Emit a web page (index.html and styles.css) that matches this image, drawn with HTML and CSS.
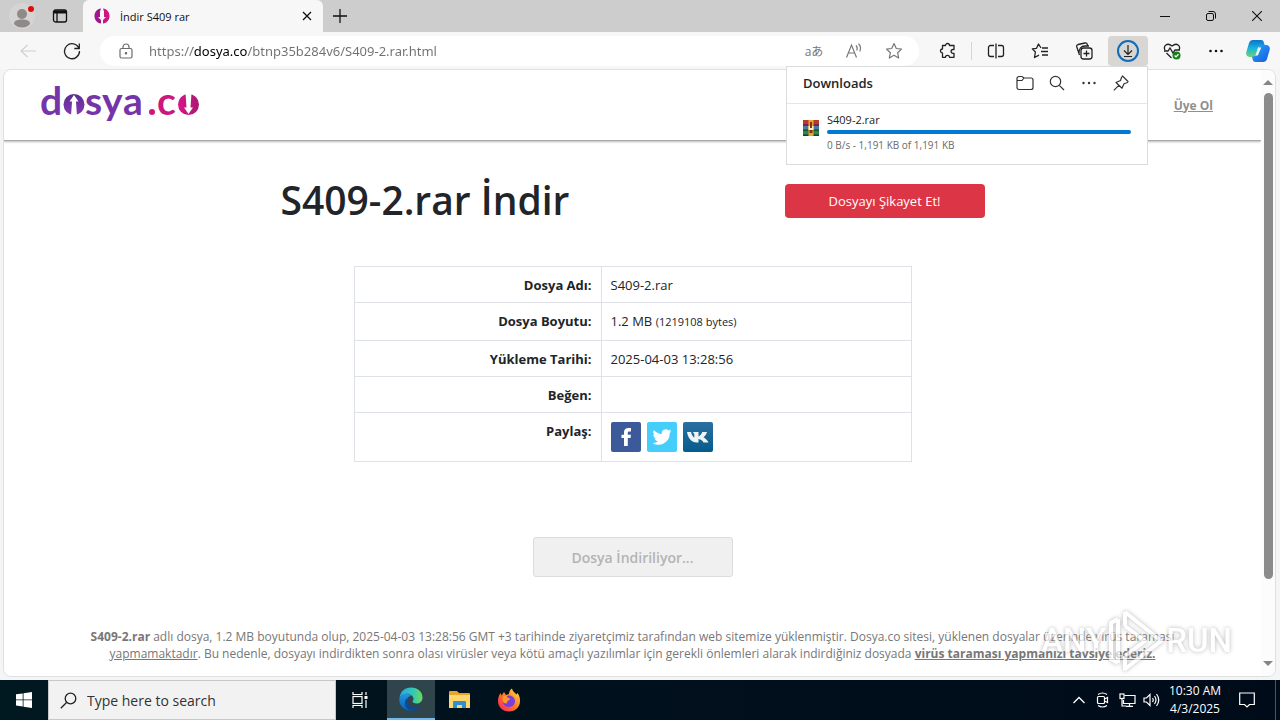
FILE: index.html
```html
<!DOCTYPE html>
<html lang="tr">
<head>
<meta charset="utf-8">
<title>İndir S409 rar</title>
<link rel="stylesheet" href="styles.css">
</head>
<body>
<div class="browser">
  <header class="tabs">
    <button class="icon-btn profile" aria-label="Profile"><svg width="32" height="30" viewBox="0 0 32 30"><circle cx="16" cy="15" r="13" fill="#d6d4d2"/><circle cx="16" cy="13" r="5" fill="#8d8a88"/><path d="M8 23c0-3.500 3.500-4.500 8-4.500s8 1 8 4.500c-2 2.500-5 3.500-8 3.500s-6-1-8-3.500z" fill="#8d8a88"/><circle cx="25" cy="8" r="3" fill="#e10b0b"/></svg></button>
    <button class="icon-btn tab-actions" aria-label="Tab actions"><svg width="16" height="16" viewBox="0 0 16 16" fill="none" stroke="#111" stroke-width="1.300"><rect x="1.500" y="2" width="13" height="12" rx="2"/><path d="M2 4h12" stroke-width="3"/><path d="M5 5v9"/></svg></button>
    <div class="tab">
      <svg width="16" height="16" viewBox="0 0 16 16"><path d="M7 .5C3 1 .5 4 .5 8S3 15 7 15.500V12L4 9h2V3.500z" fill="#a0168c"/><path d="M9 .5c4 .5 6.500 3.500 6.500 7.500S13 15 9 15.500V12l3-3h-2V3.500z" fill="#cf1580"/></svg>
      <span class="tab-title">İndir S409 rar</span>
      <button class="icon-btn tab-close" aria-label="Close tab"><svg width="10" height="10" viewBox="0 0 10 10" stroke="#111" stroke-width="1.300"><path d="M1 1l8 8M9 1l-8 8"/></svg></button>
    </div>
    <button class="icon-btn new-tab" aria-label="New tab"><svg width="14" height="14" viewBox="0 0 14 14" stroke="#111" stroke-width="1.300"><path d="M7 0v14M0 7h14"/></svg></button>
    <div class="window-controls">
      <button class="icon-btn" aria-label="Minimize"><svg width="10" height="10" viewBox="0 0 10 10" stroke="#111"><path d="M0 5.500h10"/></svg></button>
      <button class="icon-btn" aria-label="Restore"><svg width="10" height="10" viewBox="0 0 10 10" fill="none" stroke="#111"><rect x=".5" y="2.500" width="7" height="7" rx="1.500"/><path d="M2.500.5H7a2.500 2.500 0 0 1 2.500 2.500v4.500"/></svg></button>
      <button class="icon-btn" aria-label="Close"><svg width="10" height="10" viewBox="0 0 10 10" stroke="#111" stroke-width="1.100"><path d="M0 0l10 10M10 0L0 10"/></svg></button>
    </div>
  </header>

  <nav class="toolbar">
    <button class="icon-btn nav-btn" aria-label="Back" disabled><svg width="16" height="14" viewBox="0 0 16 14" fill="none" stroke="#cfcfcf" stroke-width="1.200"><path d="M16 7H1M7.500 1L1 7l6.500 6"/></svg></button>
    <button class="icon-btn nav-btn" aria-label="Refresh"><svg width="18" height="18" viewBox="0 0 18 18" fill="none" stroke="#222" stroke-width="1.300"><path d="M16 6.500A7.500 7.500 0 1 0 16.500 9M16.300 1.500v5h-5"/></svg></button>
    <div class="address">
      <svg class="lock" width="14" height="16" viewBox="0 0 14 16" fill="none" stroke="#6c6c6c" stroke-width="1.200"><rect x="1" y="5.500" width="12" height="9.500" rx="1.500"/><path d="M4 5.500V4a3 3 0 0 1 6 0v1.500"/><circle cx="7" cy="10.300" r=".7" fill="#6c6c6c"/></svg>
      <input class="url" type="text" aria-label="Address" value="https://dosya.co/btnp35b284v6/S409-2.rar.html">
      <button class="icon-btn tool translate" aria-label="Translate"><span>aあ</span></button>
      <button class="icon-btn tool" aria-label="Read aloud"><svg width="18" height="16" viewBox="0 0 18 16" fill="none" stroke="#777" stroke-width="1.200"><path d="M1.500 14.500L6.500 2l5 12.500M3.200 10h6.600M11 2.500q2 2 .8 5M13.500.8q3.300 3.200 1.300 7.700"/></svg></button>
      <button class="icon-btn tool" aria-label="Add to favorites"><svg width="18" height="18" viewBox="0 0 18 18" fill="none" stroke="#777" stroke-width="1.200" stroke-linejoin="round"><path d="M9 1.500l2.300 5 5.200.6-3.900 3.600 1.100 5.300L9 13.300 4.300 16l1.100-5.300L1.500 7.100l5.200-.6z"/></svg></button>
    </div>
    <button class="icon-btn tool" aria-label="Extensions"><svg width="18" height="18" viewBox="0 0 18 18" fill="none" stroke="#222" stroke-width="1.300" stroke-linejoin="round"><path d="M3.500 3.500h3a2 2 0 1 1 4 0H15v4h-1a1.800 1.800 0 1 0 0 3.800h1v4h-4.500a2 2 0 0 0-4 0h-3V11a2 2 0 1 1 0-4z"/></svg></button>
    <span class="divider"></span>
    <button class="icon-btn tool" aria-label="Split screen"><svg width="18" height="18" viewBox="0 0 18 18" fill="none" stroke="#222" stroke-width="1.300"><path d="M7 3.500H3.500a2 2 0 0 0-2 2v7a2 2 0 0 0 2 2H7M11 3.500h3.500a2 2 0 0 1 2 2v7a2 2 0 0 1-2 2H11M9 1.500v15"/></svg></button>
    <button class="icon-btn tool" aria-label="Favorites"><svg width="18" height="18" viewBox="0 0 18 18" fill="none" stroke="#222" stroke-width="1.300" stroke-linejoin="round"><path d="M10 6L7.500 2 5.500 6.300l-4.200.6L4.400 10l-.9 5.500L8 13.200M11 6h6M10 9.500h7M11 13h6"/></svg></button>
    <button class="icon-btn tool" aria-label="Collections"><svg width="18" height="18" viewBox="0 0 18 18" fill="none" stroke="#222" stroke-width="1.300"><rect x="6" y="6" width="11" height="11" rx="2.500"/><path d="M11.500 8.500v6M8.500 11.500h6M4.500 13L1.800 5a2 2 0 0 1 1.300-2.500L10 1a2 2 0 0 1 2.300 1.500l.5 1.500M4 12c0-5 1-8 6-8h4"/></svg></button>
    <button class="icon-btn tool active" aria-label="Downloads" aria-expanded="true"><svg width="22" height="22" viewBox="0 0 22 22" fill="none"><circle cx="11" cy="11" r="10" stroke="#0f6cbd" stroke-width="2"/><path d="M11 5v9M7 10.500l4 4 4-4M7 16.500h8" stroke="#222" stroke-width="1.200"/></svg></button>
    <button class="icon-btn tool" aria-label="Browser essentials"><svg width="18" height="18" viewBox="0 0 18 18" fill="none" stroke="#222" stroke-width="1.300"><path d="M2 8C0 4 4 0 9 4c5-4 9 0 7 4M1 9h4l2-3 3 5 2-3h5M3.500 11l5 5"/><circle cx="13.500" cy="13.500" r="4" fill="#16801a" stroke="none"/><path d="M11.600 13.500l1.400 1.400 2.500-2.700" stroke="#fff"/></svg></button>
    <button class="icon-btn tool" aria-label="Settings and more"><svg width="16" height="4" viewBox="0 0 16 4" fill="#111"><circle cx="2.500" cy="2" r="1.300"/><circle cx="8" cy="2" r="1.300"/><circle cx="13.500" cy="2" r="1.300"/></svg></button>
    <button class="icon-btn copilot" aria-label="Copilot"><svg width="24" height="24" viewBox="0 0 24 24"><defs><linearGradient id="ca" x1="0" y1="0" x2="0" y2="1"><stop offset="0" stop-color="#0c72cf"/><stop offset=".5" stop-color="#19b6d8"/><stop offset="1" stop-color="#76d36b"/></linearGradient><linearGradient id="cb" x1="0" y1="0" x2="1" y2="1"><stop offset="0" stop-color="#2aa8f5"/><stop offset="1" stop-color="#1659e0"/></linearGradient></defs><path d="M7 1h8c2 0 2.500 1 3 3l1 3h-4c-2 0-3 1-3.500 3L10 15c-.6 2-1.500 3-3.500 3H4c-3 0-4.500-2-3.500-5.500L3 4C3.700 2 5 1 7 1z" fill="url(#ca)"/><path d="M17 23H9.500C7.500 23 7 22 6.500 20L6 17.500h1c2 0 3-1 3.500-3L13 8c.6-1.500 1.500-2 3.500-2H20c3 0 4.500 2 3.500 5.500L21 20c-.7 2-2 3-4 3z" fill="url(#cb)"/><path d="M12.700 8.500h2.600l-3.500 8H9.500z" fill="#eef9ff"/></svg></button>

    <section class="downloads" aria-label="Downloads">
      <div class="downloads-head">
        <h2>Downloads</h2>
        <button class="icon-btn small" aria-label="Open downloads folder"><svg width="18" height="16" viewBox="0 0 18 16" fill="none" stroke="#333" stroke-width="1.200"><path d="M1 5.500V3.500a2 2 0 0 1 2-2h3L8 3h7a2 2 0 0 1 2 2v7.500a2 2 0 0 1-2 2H3a2 2 0 0 1-2-2zM1 5.500h5L8 3"/></svg></button>
        <button class="icon-btn small" aria-label="Search downloads"><svg width="16" height="16" viewBox="0 0 16 16" fill="none" stroke="#333" stroke-width="1.200"><circle cx="6.500" cy="6.500" r="5.200"/><path d="M10.300 10.300L15 15"/></svg></button>
        <button class="icon-btn small" aria-label="More options"><svg width="16" height="4" viewBox="0 0 16 4" fill="#333"><circle cx="2.500" cy="2" r="1.200"/><circle cx="8" cy="2" r="1.200"/><circle cx="13.500" cy="2" r="1.200"/></svg></button>
        <button class="icon-btn small" aria-label="Pin downloads"><svg width="16" height="16" viewBox="0 0 16 16" fill="none" stroke="#333" stroke-width="1.200" stroke-linejoin="round"><path d="M9.500 1l5.500 5.500-1 1.200-3 1-2 4.500L3 7.500l4.500-2 1-3zM5.800 10.300L.8 15.300"/></svg></button>
      </div>
      <div class="download">
        <svg width="16" height="16" viewBox="0 0 16 16"><path fill="#b83a2c" d="M0 0h16v5H0z"/><path fill="#4c78a8" d="M0 5h16v5H0z"/><path fill="#278a45" d="M0 10h16v6H0z"/><path fill="#7c2448" d="M0 4h6v2H0zM10 4h6v2h-6z"/><path fill="#1c3f2a" d="M0 9.500h16v1.200H0zM0 14.500h16V16H0z"/><path fill="#e8a62c" d="M5.500 0h5v16h-5z"/><path fill="#fff0bd" d="M5.500 6h5v4h-5z"/><path fill="#8a2d20" d="M7 2h2v6H7zM6.500 10h3v3h-3z"/></svg>
        <div class="download-info">
          <span class="download-name">S409-2.rar</span>
          <div class="progress" role="progressbar" aria-valuenow="100" aria-label="S409-2.rar"></div>
          <span class="download-size">0 B/s - 1,191 KB of 1,191 KB</span>
        </div>
      </div>
    </section>
  </nav>

  <div class="viewport">
    <div class="page">
      <header class="site-head">
        <a class="logo" href="#" aria-label="dosya.co"><svg width="162" height="60" viewBox="0 0 162 60"><defs><linearGradient id="lp" x1="0" y1="0" x2="0" y2="1"><stop offset="0" stop-color="#5a2d91"/><stop offset="1" stop-color="#8538b4"/></linearGradient><linearGradient id="lk" x1="0" y1="0" x2="1" y2="0"><stop offset="0" stop-color="#d81686"/><stop offset="1" stop-color="#a81972"/></linearGradient></defs><text class="logo-purple" x="0" y="40">d</text><text class="logo-purple" x="45" y="40">s</text><text class="logo-purple" x="62" y="40">y</text><text class="logo-purple" x="83" y="40">a</text><circle cx="34" cy="29.500" r="10.500" fill="url(#lp)"/><path d="M34 20l4.500 6.500h-2.500l1 14.500h-6l1-14.500h-2.500z" fill="#fff"/><circle cx="112" cy="37" r="3" fill="#ce1681"/><text class="logo-pink" x="117" y="40">c</text><circle cx="148.500" cy="29.500" r="10.500" fill="url(#lk)"/><path d="M148.500 39l-4.500-6.500h2.500l-1-14.500h6l-1 14.500h2.500z" fill="#fff"/></svg></a>
        <a class="signup" href="#">Üye Ol</a>
      </header>
      <main class="content">
        <div class="title-row">
          <h1>S409-2.rar İndir</h1>
          <button class="report">Dosyayı Şikayet Et!</button>
        </div>
        <table class="details">
          <tr><th scope="row">Dosya Adı:</th><td>S409-2.rar</td></tr>
          <tr><th scope="row">Dosya Boyutu:</th><td>1.2 MB <small>(1219108 bytes)</small></td></tr>
          <tr><th scope="row">Yükleme Tarihi:</th><td>2025-04-03 13:28:56</td></tr>
          <tr><th scope="row">Beğen:</th><td></td></tr>
          <tr><th scope="row">Paylaş:</th><td><div class="share">
            <a href="#" aria-label="Facebook"><svg width="30" height="30" viewBox="0 0 30 30"><rect width="30" height="30" rx="2" fill="#3c5a99"/><path d="M13 24v-8h-2.500v-3.300H13v-2.200C13 7.500 14.500 6 17.300 6H20v3.400h-1.700c-1.200 0-1.500.5-1.500 1.500v1.800H20l-.5 3.300h-2.700v8z" fill="#fff"/></svg></a>
            <a href="#" aria-label="Twitter"><svg width="30" height="30" viewBox="0 0 30 30"><rect width="30" height="30" rx="2" fill="#45cdfb"/><path d="M24.500 9c-.7.400-1.400.5-2.200.6.800-.5 1.400-1.200 1.700-2.100-.7.400-1.600.8-2.500.9a4 4 0 0 0-6.700 3.600c-3.200-.2-6.100-1.700-8-4.100-1.100 1.900-.5 4 1.200 5.200-.7 0-1.300-.2-1.800-.5 0 1.900 1.300 3.500 3.100 3.900-.6.100-1.200.2-1.800.1.500 1.600 2 2.700 3.700 2.700a8 8 0 0 1-5.800 1.700 11.300 11.300 0 0 0 17.300-10c.8-.5 1.400-1.200 1.800-2z" fill="#fff"/></svg></a>
            <a href="#" aria-label="VK"><svg width="30" height="30" viewBox="0 0 30 30"><defs><linearGradient id="vk" x1="0" y1="0" x2="0" y2="1"><stop offset="0" stop-color="#2a70a0"/><stop offset="1" stop-color="#055b8e"/></linearGradient></defs><rect width="30" height="30" rx="2" fill="url(#vk)"/><path d="M4 10h4c.5 2.500 2 5 3.300 5.700V12l-1.500-2H15.500v4.500c1.500-.5 3-2.500 3.800-4.500H24c-.5 2-2 4-3.500 5.200 2 1.200 3.800 2.800 5 5.300h-5c-.8-1.700-2.500-3-5-3.500v3.500h-1.800C8.500 20.500 5 16 4 10z" fill="#eef3f6"/></svg></a>
          </div></td></tr>
        </table>
        <button class="downloading" disabled>Dosya İndiriliyor...</button>
        <p class="notice"><b>S409-2.rar</b> adlı dosya, 1.2 MB boyutunda olup, 2025-04-03 13:28:56 GMT +3 tarihinde ziyaretçimiz tarafından web sitemize yüklenmiştir. Dosya.co sitesi, yüklenen dosyalar üzerinde virüs taraması<br><u>yapmamaktadır</u>. Bu nedenle, dosyayı indirdikten sonra olası virüsler veya kötü amaçlı yazılımlar için gerekli önlemleri alarak indirdiğiniz dosyada <b><u>virüs taraması yapmanızı tavsiye ederiz.</u></b></p>
      </main>
    </div>
    <div class="scrollbar"><span class="arrow up"></span><span class="thumb"></span><span class="arrow down"></span></div>
    <div class="watermark">
      <span>ANY</span>
      <svg width="60" height="66" viewBox="0 0 60 66" fill="none" stroke="#fff" stroke-width="4" stroke-linejoin="round"><path d="M12 11L5 15v36l7 4M12 11v44M19 4v14M19 48v13l36-28L19 4M19 18l20 15-20 15"/></svg>
      <span>RUN</span>
    </div>
  </div>
</div>

<footer class="taskbar">
  <button class="icon-btn task" aria-label="Start"><svg width="16" height="16" viewBox="0 0 16 16" fill="#fff"><path d="M0 2.300L6.700 1.400v6.100H0zM7.500 1.300L16 0v7.500H7.500zM0 8.300h6.700v6.200L0 13.600zM7.500 8.300H16V16l-8.500-1.200z"/></svg></button>
  <label class="search"><svg width="17" height="17" viewBox="0 0 17 17" fill="none" stroke="#222" stroke-width="1.300"><circle cx="10.500" cy="6.500" r="5.300"/><path d="M6.800 10.300L.8 16.300"/></svg><input type="text" placeholder="Type here to search" aria-label="Search"></label>
  <button class="icon-btn task taskview" aria-label="Task View"><svg width="16" height="16" viewBox="0 0 16 16" fill="none" stroke="#fff" stroke-width="1.200"><path d="M1 0v2.500h9V0M1 16v-2.500h9V16M14 0v3M14 8v8"/><rect x="1" y="4.500" width="9" height="7"/><path d="M12.500 5.500h3" stroke-width="3"/></svg></button>
  <button class="icon-btn task current" aria-label="Microsoft Edge"><svg width="24" height="24" viewBox="0 0 24 24"><defs><linearGradient id="ea" x1="0" y1="0" x2="1" y2="0"><stop offset="0" stop-color="#28a9e4"/><stop offset=".6" stop-color="#35c8b4"/><stop offset="1" stop-color="#69dc55"/></linearGradient><linearGradient id="eb" x1="0" y1="0" x2="0" y2="1"><stop offset="0" stop-color="#1f98e0"/><stop offset="1" stop-color="#0d5fb5"/></linearGradient></defs><path d="M.5 11C1.500 4 6 .5 12 .5c7 0 11.500 4.500 11.500 10 0 4-3 6-6 6-2.500 0-4-1-4-1.700s1-1.300 1-3c0-2.500-3-5-6.500-5S1.500 8.500.5 11z" fill="url(#ea)"/><path d="M.5 11c1-3 4-4.500 7-4.200 2.500.2 4 1.200 5 2.200-3 0-5 2.500-4.500 6 .5 4 4.500 7.300 9 7.300-6 3.200-16 .5-16.700-9z" fill="url(#eb)"/><path d="M8.500 10.500c-1.500 4 .5 8 4.500 9.300 3.500 1 6.500 0 9-1.800-2 4-6 6-10 5.500-6-1-8.500-8.500-3.500-13z" fill="#0b4a94"/></svg></button>
  <button class="icon-btn task" aria-label="File Explorer"><svg width="22" height="20" viewBox="0 0 22 20"><path d="M0 2q0-1 1-1h7l2 2h10q1 0 1 1v14H0z" fill="#e7a52e"/><path d="M0 5h21v13H0z" fill="#ffd66b"/><path d="M4 18v-6q0-1 1-1h11q1 0 1 1v6h-4v-3H8v3z" fill="#2f8fd0"/></svg></button>
  <button class="icon-btn task" aria-label="Firefox"><svg width="24" height="24" viewBox="0 0 24 24"><defs><linearGradient id="fa" x1="1" y1="0" x2="0" y2="1"><stop offset="0" stop-color="#ffe545"/><stop offset=".5" stop-color="#ff7a22"/><stop offset="1" stop-color="#ee1b6a"/></linearGradient></defs><path d="M12 23.500C5.500 23.500 1 19 1 13c0-3 1-6 2.500-8l1 2.500L7 4l2 3 3-1C12 4 13 1.500 15 .5c.5 3 3 4 4.500 6L20.500 5C22.500 8 23 10 23 13c0 6-4.500 10.500-11 10.500z" fill="url(#fa)"/><path d="M12 7.500c3.500 0 6 2.500 6 5.800S15.500 19 12 19s-6-2.500-6-5.500l3 .5 3-2-3-2c.5-1.500 1.500-2.500 3-2.500z" fill="#7b3ce0"/><path d="M6 8.500c2-1 4 0 4.500 1l3 1.500-3 2-1 2.500C6 15.500 5 12 6 8.500z" fill="#ff9a2a"/></svg></button>
  <div class="tray">
    <button class="icon-btn tray-btn" aria-label="Show hidden icons"><svg width="12" height="8" viewBox="0 0 12 8" fill="none" stroke="#fff" stroke-width="1.300"><path d="M.5 7L6 1.500 11.500 7"/></svg></button>
    <button class="icon-btn tray-btn" aria-label="Meet now"><svg width="14" height="16" viewBox="0 0 14 16" fill="none" stroke="#fff" stroke-width="1.200"><rect x="1.500" y="4.500" width="7" height="7" rx="1"/><path d="M8.500 7l3-1.500v5l-3-1.500M2 2.500q4.500-3 9 0M2 13.500q4.500 3 9 0"/></svg></button>
    <button class="icon-btn tray-btn" aria-label="Network"><svg width="17" height="14" viewBox="0 0 17 14" fill="none" stroke="#fff" stroke-width="1.200"><path d="M5.500 2.500h10.500v8H4.500V7M10.500 10.500v3M7 13.400h7M3 5.500V13h4"/><rect x="1" y="1" width="4" height="4.500"/></svg></button>
    <button class="icon-btn tray-btn" aria-label="Volume"><svg width="17" height="14" viewBox="0 0 17 14" fill="none" stroke="#fff" stroke-width="1.200"><path d="M1 5v4h2.500L7 12.500v-11L3.500 5zM9.500 5q1.500 2 0 4M11.500 3q3 4 0 8M13.500 1q4.500 6 0 12"/></svg></button>
    <time class="clock" datetime="2025-04-03T10:30">10:30 AM<br>4/3/2025</time>
    <button class="icon-btn notify" aria-label="Notifications"><svg width="16" height="16" viewBox="0 0 16 16" fill="none" stroke="#fff" stroke-width="1.200"><path d="M.7 1h14.600v11.500h-4.800L8 15l-2.500-2.500H.7z"/></svg></button>
    <span class="show-desktop"></span>
  </div>
</footer>
</body>
</html>
```
FILE: styles.css
```css
* { box-sizing: border-box; }

body {
  margin: 0;
  height: 100vh;
  display: flex;
  flex-direction: column;
  overflow: hidden;
  font-family: "Open Sans", "Noto Sans", sans-serif;
  font-size: 12px;
  color: #212529;
  background: #f3f5f7;
}

button, input { font: inherit; color: inherit; }

svg { display: block; flex: none; }

.icon-btn {
  display: flex;
  align-items: center;
  justify-content: center;
  flex: none;
  padding: 0;
  border: 0;
  background: none;
}

.browser {
  flex: 1;
  min-height: 0;
  display: flex;
  flex-direction: column;
  padding-bottom: 3px;
}

/* tab strip */
.tabs {
  display: flex;
  align-items: center;
  height: 32px;
  background: #cdcdcd;
}
.profile { width: 32px; margin-left: 6px; }
.tab-actions { width: 32px; margin-left: 6px; }
.tab {
  display: flex;
  align-items: center;
  align-self: stretch;
  gap: 10px;
  width: 240px;
  margin-left: 7px;
  padding: 0 10px 0 11px;
  border-radius: 6px 6px 0 0;
  background: #f7f7f7;
  color: #111;
}
.tab-title { flex: 1; font-size: 11px; }
.tab-close { width: 12px; height: 20px; }
.new-tab { width: 34px; }
.window-controls { display: flex; margin-left: auto; }
.window-controls .icon-btn { width: 46px; height: 32px; }

/* toolbar */
.toolbar {
  position: relative;
  display: flex;
  align-items: center;
  gap: 4px;
  height: 37px;
  padding: 0 4px 0 8px;
  background: #f7f7f7;
}
.nav-btn { width: 40px; height: 30px; }
.address {
  flex: 1;
  display: flex;
  align-items: center;
  height: 30px;
  margin: 0 5px 0 4px;
  padding: 0 5px 0 19px;
  border-radius: 15px;
  background: #fff;
}
.url {
  flex: 1;
  min-width: 0;
  margin-left: 16px;
  padding: 0;
  border: 0;
  font-family: "Noto Sans", sans-serif;
  font-size: 13px;
  background: linear-gradient(90deg, #707070 44px, #000 44px 98px, #707070 98px);
  -webkit-background-clip: text;
  background-clip: text;
  color: transparent;
}
.tool { width: 40px; height: 30px; border-radius: 4px; }
.translate { font-family: "Open Sans", "Noto Sans CJK JP", sans-serif; font-size: 12px; color: #777; }
.divider { width: 1px; height: 18px; margin: 0 0 0 -1px; background: #d5d5d5; }
.active { background: #d8d6d3; }
.copilot { width: 36px; height: 30px; }

/* downloads flyout */
.downloads {
  position: absolute;
  z-index: 2;
  top: 34px;
  right: 132px;
  width: 362px;
  height: 99px;
  border: 1px solid #dcdcdc;
  background: #fff;
}
.downloads-head {
  display: flex;
  align-items: center;
  height: 37px;
  padding: 0 10px 5px 16px;
  border-bottom: 1px solid #e6e6e6;
}
.downloads h2 { flex: 1; margin: 0; font-size: 13px; font-weight: 600; }
.small { width: 32px; height: 28px; }
.download { display: flex; align-items: flex-start; gap: 8px; padding: 8px 16px; }
.download svg { margin-top: 8px; }
.download-info { flex: 1; display: flex; flex-direction: column; }
.download-name { font-size: 11px; line-height: 16px; color: #222; }
.progress { height: 4px; margin: 2px 0; border-radius: 2px; background: #0078d4; }
.download-size { font-size: 10px; line-height: 18px; color: #6a6a6a; }

/* web page area */
.viewport {
  position: relative;
  flex: 1;
  min-height: 0;
  display: flex;
  margin: 0 4px 0 3px;
  border: 1px solid #e0e0e0;
  border-radius: 8px;
  overflow: hidden;
  background: #fff;
}
.page { flex: 1; }
.site-head {
  display: flex;
  align-items: center;
  justify-content: space-between;
  height: 71px;
  padding: 0 48px 0 36px;
  border-bottom: 1px solid #a8a8a8;
  box-shadow: 0 1px 2px #bbb;
}
.logo-purple, .logo-pink { font: 700 39px Lato, sans-serif; }
.logo-purple { fill: #7534a8; }
.logo-pink { fill: #cc1780; }
.signup { font-size: 12px; font-weight: 700; color: #8f8f8f; }
.content { display: flex; flex-direction: column; align-items: center; }
.title-row {
  display: flex;
  align-items: center;
  justify-content: space-between;
  width: 100%;
  max-width: 704px;
  margin: 31px 0 36px;
}
h1 { margin: 0; padding-bottom: 2px; font-size: 39px; font-weight: 600; line-height: 56px; }
.report {
  width: 200px;
  height: 34px;
  border: 0;
  border-radius: 4px;
  background: #dc3545;
  color: #fff;
  font-size: 13px;
}
.details {
  width: 100%;
  max-width: 558px;
  height: 196px;
  border-collapse: collapse;
  font-size: 13px;
  line-height: 20px;
}
.details th, .details td { padding: 8px 9px 7px; border: 1px solid #dee2e6; vertical-align: top; }
.details th { width: 247px; text-align: right; font-weight: 700; }
.details td { text-align: left; }
.details small { font-size: 11px; }
.share { display: flex; gap: 6px; padding: 1px 0; }
.downloading {
  width: 200px;
  height: 40px;
  margin-top: 75px;
  border: 1px solid #dcdcdc;
  border-radius: 3px;
  background: #f0f0f0;
  color: #b4b4b4;
  font-size: 14px;
  font-weight: 600;
}
.notice {
  margin: 51px 0 0;
  font-size: 12px;
  line-height: 17px;
  text-align: center;
  white-space: nowrap;
  color: #777;
}
.scrollbar {
  display: flex;
  flex-direction: column;
  align-items: center;
  width: 14px;
  padding: 10px 0;
  background: #fcfcfc;
}
.arrow { border: 5px solid transparent; }
.up { border-top: 0; border-bottom-color: #858585; }
.down { border-bottom: 0; border-top-color: #858585; margin-top: auto; }
.thumb { width: 9px; height: 83%; margin-top: 8px; border-radius: 5px; background: #8b8b8b; }

.watermark {
  position: absolute;
  right: 43px;
  bottom: 2px;
  display: flex;
  align-items: center;
  opacity: .7;
  color: #fff;
  font: 500 33px/66px Roboto, sans-serif;
  filter: drop-shadow(0 0 2px #999);
  pointer-events: none;
}

/* taskbar */
.taskbar {
  display: flex;
  align-items: stretch;
  gap: 1px;
  height: 40px;
  background: linear-gradient(90deg, #001820, #00101c 50%, #000b1a);
  color: #fff;
}
.task { width: 48px; }
.search {
  display: flex;
  align-items: center;
  gap: 10px;
  width: 288px;
  margin-left: -1px;
  padding-left: 11px;
  border: 1px solid #c8c8c8;
  background: #f2f2f2;
}
.search input { flex: 1; min-width: 0; padding: 0; border: 0; background: none; font-size: 14px; }
.search input::placeholder { color: #333; opacity: 1; }
.taskview { margin: 0 2px 0 -1px; }
.current { background: #30444c; border-bottom: 2px solid #76b9ed; }
.tray { display: flex; align-items: center; margin-left: auto; }
.tray-btn { width: 24px; height: 40px; }
.clock { width: 64px; line-height: 18px; text-align: center; }
.notify { width: 40px; height: 40px; }
.show-desktop { width: 1px; height: 40px; margin: 0 4px 0 8px; background: #4a5560; }
```
